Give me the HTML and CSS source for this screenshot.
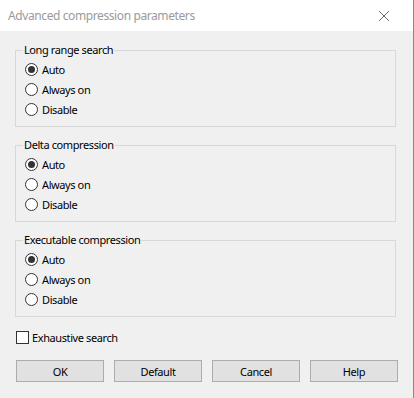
FILE: index.html
```html
<!DOCTYPE html>
<html>
<head>
<meta charset="utf-8">
<link rel="stylesheet" href="styles.css">
</head>
<body>
<div class="window">
  <div class="titlebar">
    <span class="title">Advanced compression parameters</span>
    <svg class="close" width="12" height="12" viewBox="0 0 12 12"><path d="M1 1L11 11M11 1L1 11" stroke="#6e6e6e" stroke-width="1" fill="none"/></svg>
  </div>
  <div class="content">
    <fieldset class="group">
      <legend>Long range search</legend>
      <div class="row"><span class="radio checked"></span><span>Auto</span></div>
      <div class="row"><span class="radio"></span><span>Always on</span></div>
      <div class="row"><span class="radio"></span><span>Disable</span></div>
    </fieldset>
    <fieldset class="group">
      <legend>Delta compression</legend>
      <div class="row"><span class="radio checked"></span><span>Auto</span></div>
      <div class="row"><span class="radio"></span><span>Always on</span></div>
      <div class="row"><span class="radio"></span><span>Disable</span></div>
    </fieldset>
    <fieldset class="group">
      <legend>Executable compression</legend>
      <div class="row"><span class="radio checked"></span><span>Auto</span></div>
      <div class="row"><span class="radio"></span><span>Always on</span></div>
      <div class="row"><span class="radio"></span><span>Disable</span></div>
    </fieldset>
    <div class="row check-row"><span class="checkbox"></span><span>Exhaustive search</span></div>
    <div class="buttons">
      <div class="btn">OK</div>
      <div class="btn">Default</div>
      <div class="btn">Cancel</div>
      <div class="btn">Help</div>
    </div>
  </div>
</div>
</body>
</html>
```
FILE: styles.css
```css
html, body {
  margin: 0;
  padding: 0;
}
body {
  width: 414px;
  height: 398px;
  overflow: hidden;
  font-family: "Noto Sans", "Open Sans", sans-serif;
  font-size: 11px;
  letter-spacing: -0.4px;
  color: #000;
  background: #f0f0f0;
}
.window {
  width: 413px;
  height: 398px;
  border-right: 1px solid #8a8a8a;
  background: #f0f0f0;
}
.titlebar {
  height: 31px;
  background: #fff;
  display: flex;
  align-items: center;
  justify-content: space-between;
  padding: 0 23px 0 8px;
  box-sizing: border-box;
}
.title {
  color: #9a9a9a;
  font-size: 12px;
  letter-spacing: -0.4px;
  line-height: 16px;
}
.close {
  display: block;
}
.content {
  padding: 11px 0 0 15px;
}
.group {
  width: 381px;
  box-sizing: border-box;
  margin: 0 0 10px 0;
  padding: 1px 0 7px 7px;
  border: 1px solid #d8d8d8;
  min-width: 0;
}
.group legend {
  padding: 0 1px;
  line-height: 16px;
}
.row {
  display: flex;
  align-items: center;
  height: 20px;
  gap: 4px;
}
.radio {
  width: 11px;
  height: 11px;
  border: 1px solid #333;
  border-radius: 50%;
  background: #fff;
  margin-left: 2px;
  display: flex;
  align-items: center;
  justify-content: center;
}
.radio.checked::after {
  content: "";
  width: 7px;
  height: 7px;
  border-radius: 50%;
  background: #333;
}
.check-row {
  gap: 3px;
  margin-left: 1px;
  margin-top: 3px;
}
.checkbox {
  width: 11px;
  height: 11px;
  border: 1px solid #333;
  background: #fff;
}
.buttons {
  display: flex;
  gap: 10px;
  margin-top: 13px;
  margin-left: 1px;
}
.btn {
  width: 88px;
  height: 22px;
  box-sizing: border-box;
  border: 1px solid #adadad;
  background: #e1e1e1;
  display: flex;
  align-items: center;
  justify-content: center;
}
```
